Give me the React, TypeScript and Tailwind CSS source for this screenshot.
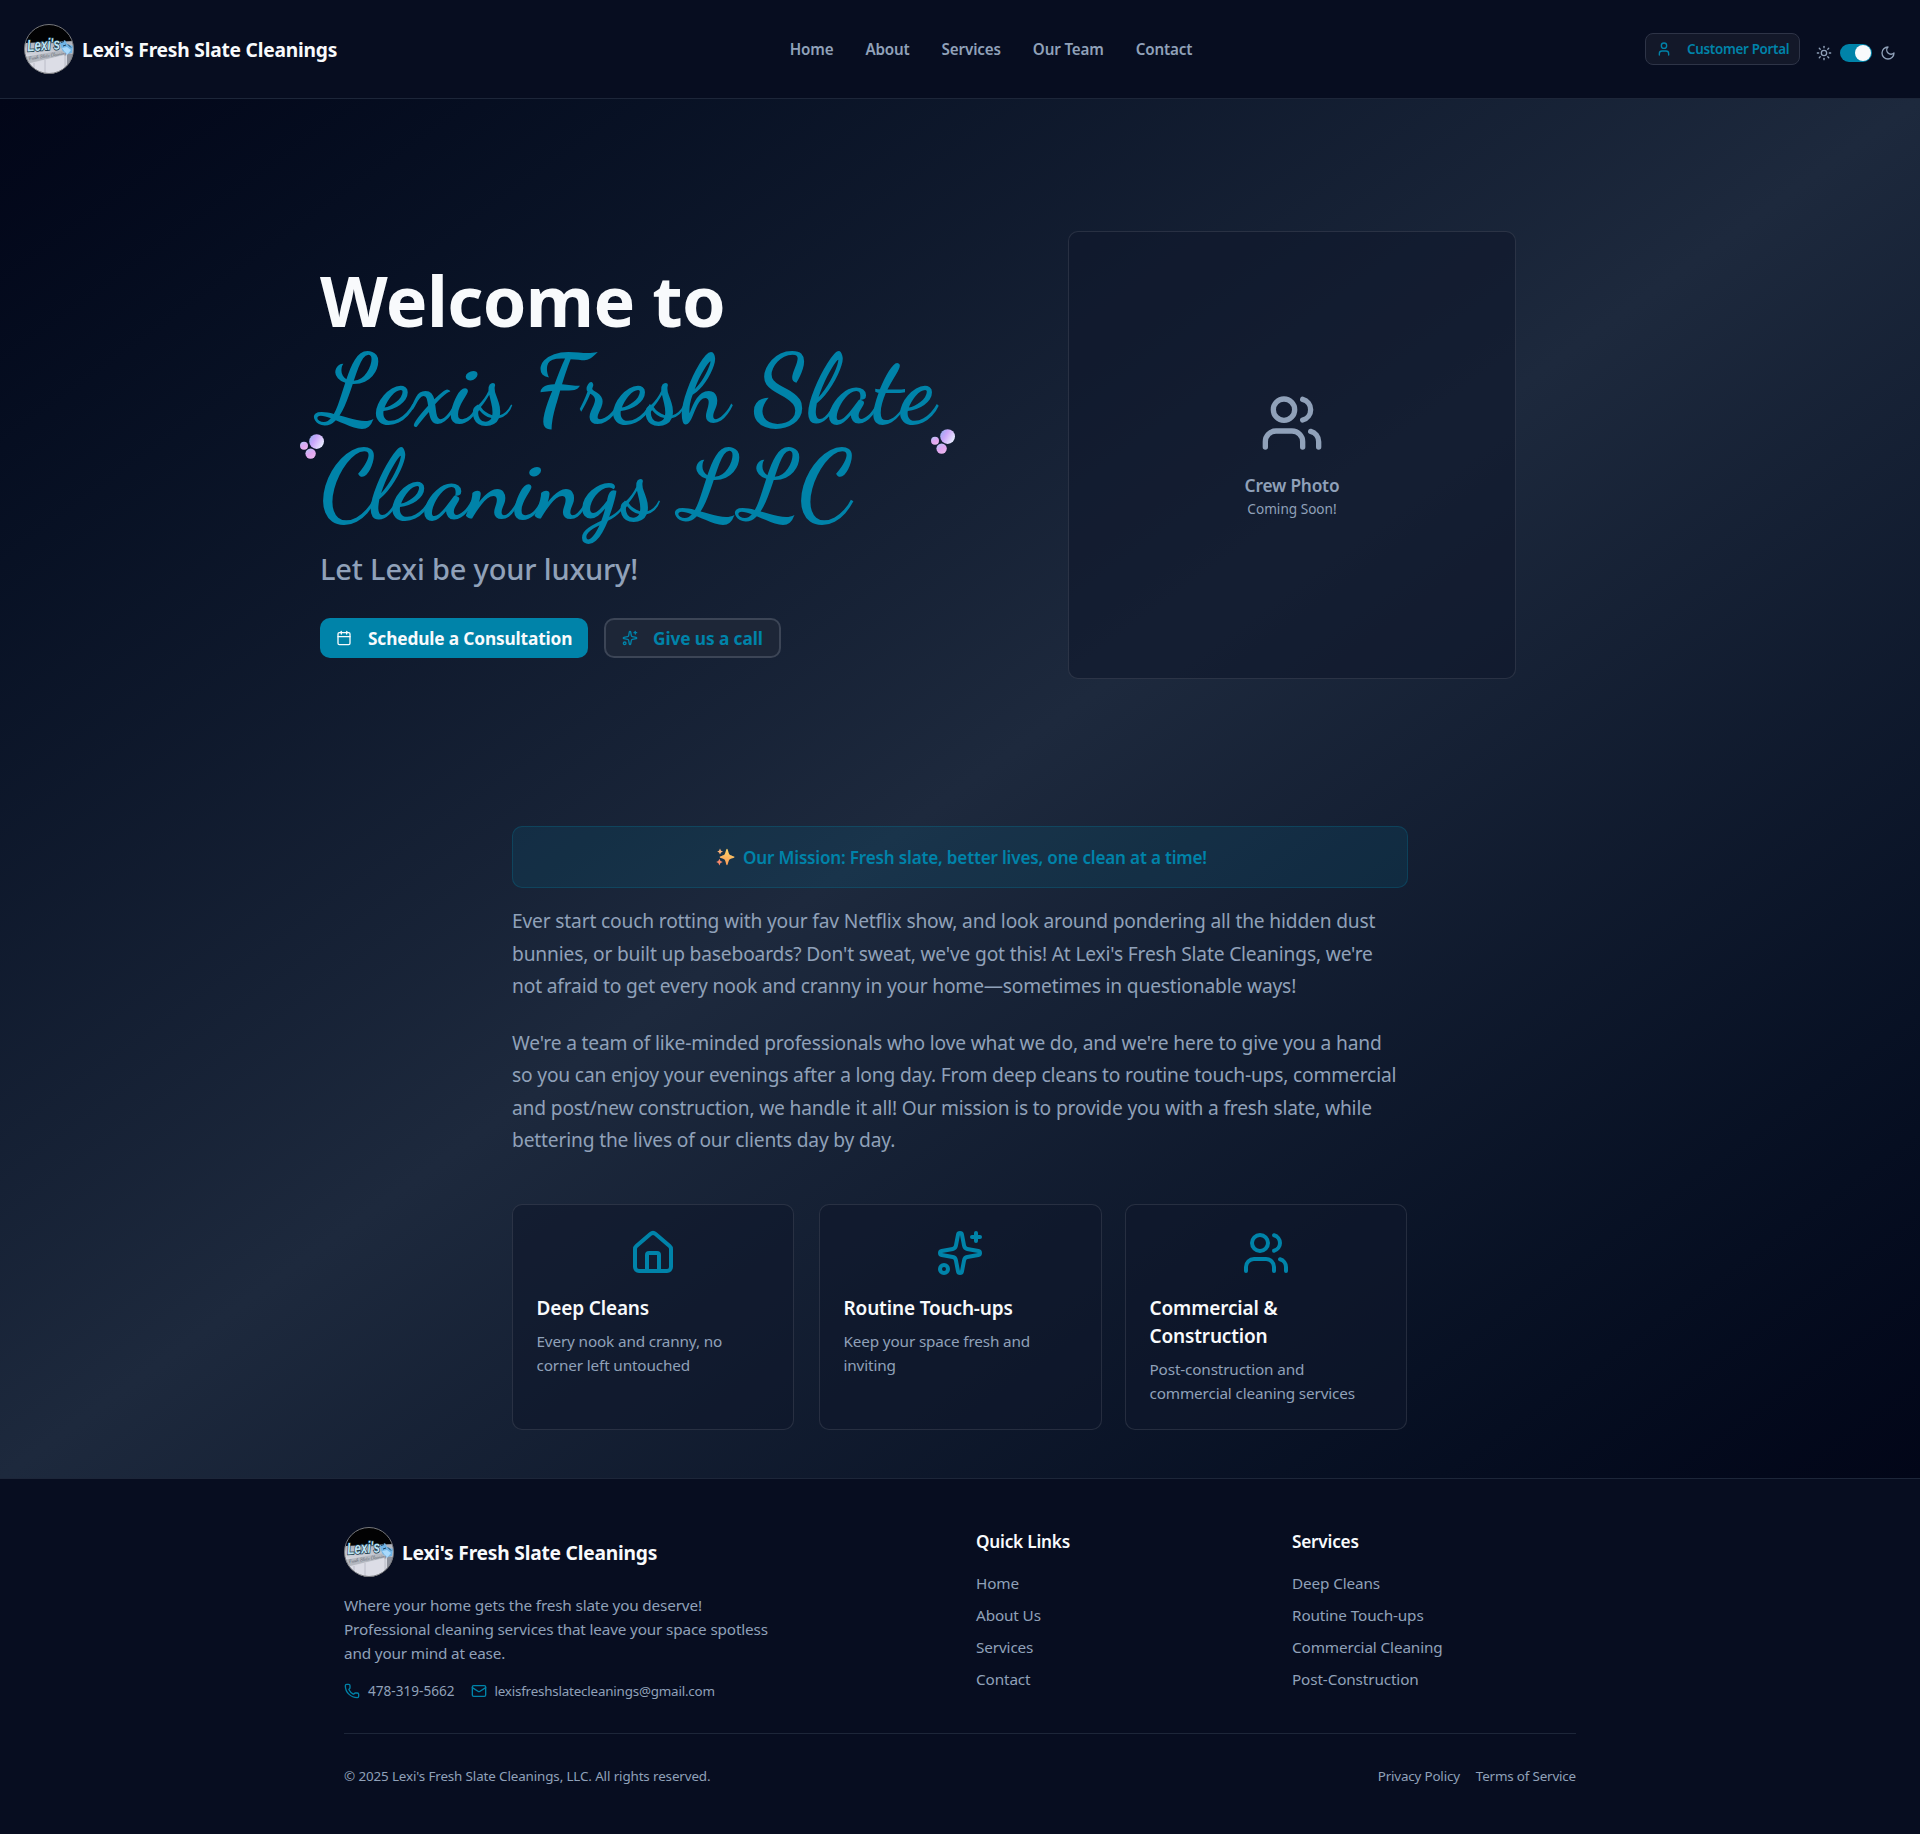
import React from 'react';
import { Calendar, House, Mail, Phone, Sparkles, Sun, User, Users } from 'lucide-react';

const navLinks = ['Home', 'About', 'Services', 'Our Team', 'Contact'];

const services = [
  { icon: House, title: 'Deep Cleans', text: 'Every nook and cranny, no corner left untouched', size: 'w-[282px]' },
  { icon: Sparkles, title: 'Routine Touch-ups', text: 'Keep your space fresh and inviting', size: 'ml-[25px] w-[283px]' },
  { icon: Users, title: 'Commercial & Construction', text: 'Post-construction and commercial cleaning services', size: 'ml-[23px] w-[282px]' },
];

const footerColumns = [
  { title: 'Quick Links', links: ['Home', 'About Us', 'Services', 'Contact'] },
  { title: 'Services', links: ['Deep Cleans', 'Routine Touch-ups', 'Commercial Cleaning', 'Post-Construction'] },
];

function Logo({ id }: { id: string }) {
  return (
    <svg className="size-[50px] shrink-0" viewBox="0 0 50 50">
      <defs>
        <clipPath id={`${id}-clip`}>
          <circle cx="25" cy="25" r="24.5" />
        </clipPath>
        <linearGradient id={`${id}-wall`} x1="0" y1="0" x2="0" y2="1">
          <stop offset="0" stopColor="#a9aeb8" />
          <stop offset="0.5" stopColor="#d9dbe3" />
          <stop offset="1" stopColor="#c9cbd4" />
        </linearGradient>
      </defs>
      <g clipPath={`url(#${id}-clip)`}>
        <rect width="50" height="50" fill="#020203" />
        <path d="M0 19 L50 17 V50 H0Z" fill={`url(#${id}-wall)`} />
        <path d="M0 33 L40 26 V31 L6 39 H0Z" fill="#b4b8c0" />
        <path d="M5 40 L41 31 V50 H5Z" fill="#dcdde6" />
        <path d="M10 39 V50 M21 36 V50 M41 29 V50" stroke="#b3b5c0" strokeWidth="0.8" fill="none" />
        <path d="M43 29 L50 30 V50 H43Z" fill="#8d919c" />
        <path d="M36 19 L41 16 L43 20 L49 22 L48 29 L42 30 L38 26Z" fill="#6fb4e6" />
        <path d="M38 24 L43 23 L47 26 L43 31Z" fill="#a9d9fb" />
        <path d="M37 18.5 L40 17.5 M44 20.5 L47 23.5 M39 22 L42 21" stroke="#1c3c57" strokeWidth="1" fill="none" />
        <text x="5" y="36" transform="rotate(-9 5 36)" fontFamily="Dancing Script" fontWeight="700" fontSize="5" fill="#6b717c">Fresh Slate Cleaning</text>
        <text x="3.5" y="27.5" transform="rotate(-4 3.5 27.5)" fontFamily="Liberation Sans" fontStyle="italic" fontWeight="700" fontSize="16.5" textLength="33" lengthAdjust="spacingAndGlyphs" stroke="#12303f" strokeWidth="1.5" paintOrder="stroke" fill="#bfe3f5">Lexi's</text>
      </g>
      <circle cx="25" cy="25" r="24.5" fill="none" stroke="#77787c" strokeWidth="1" />
    </svg>
  );
}

function Brand({ id, className }: { id: string; className: string }) {
  return (
    <div className="flex items-center gap-2">
      <Logo id={id} />
      <span className={`whitespace-nowrap text-[19.2px] font-bold tracking-[-0.21px] text-[#f8fafc] ${className}`}>
        Lexi's Fresh Slate Cleanings
      </span>
    </div>
  );
}

function Moon() {
  return (
    <svg className="size-4" viewBox="0 0 24 24" fill="none" stroke="currentColor" strokeWidth="2" strokeLinecap="round" strokeLinejoin="round">
      <path d="M12 3a6 6 0 0 0 9 9 9 9 0 1 1-9-9Z" />
    </svg>
  );
}

function Bubbles({ id, className }: { id: string; className: string }) {
  return (
    <svg className={`absolute h-[26px] w-[25px] ${className}`} viewBox="0 0 25 26">
      <defs>
        <linearGradient id={`${id}-big`} x1="0" y1="0.2" x2="1" y2="0.8">
          <stop offset="0" stopColor="#96aef0" />
          <stop offset="0.35" stopColor="#c9a5fa" />
          <stop offset="0.6" stopColor="#d9c3fb" />
          <stop offset="1" stopColor="#e9f6ff" />
        </linearGradient>
        <linearGradient id={`${id}-small`} x1="0.2" y1="0" x2="0.8" y2="1">
          <stop offset="0" stopColor="#b7c3f7" />
          <stop offset="0.5" stopColor="#e0a5f0" />
          <stop offset="1" stopColor="#ecb9ec" />
        </linearGradient>
      </defs>
      <circle cx="16.6" cy="7.6" r="7.4" fill={`url(#${id}-big)`} />
      <circle cx="4" cy="11.8" r="4" fill={`url(#${id}-small)`} />
      <circle cx="10.6" cy="19.6" r="5.2" fill={`url(#${id}-small)`} />
    </svg>
  );
}

function SparkleEmoji() {
  return (
    <svg className="h-[18px] w-[19px]" viewBox="0 0 19 18">
      <defs>
        <linearGradient id="sparkle" x1="0.6" y1="0" x2="0.4" y2="1">
          <stop offset="0" stopColor="#fbd66b" />
          <stop offset="1" stopColor="#fb9a55" />
        </linearGradient>
      </defs>
      <path d="M11 0.8C12 0.8 12.3 5.2 13.5 6.4C14.7 7.6 18.6 8 18.6 9C18.6 10 14.7 10.4 13.5 11.6C12.3 12.8 12 17.2 11 17.2C10 17.2 9.7 12.8 8.5 11.6C7.3 10.4 3.6 10 3.6 9C3.6 8 7.3 7.6 8.5 6.4C9.7 5.2 10 0.8 11 0.8Z" fill="url(#sparkle)" />
      <path d="M4 0.6L5 2.7L7 3.6L5 4.5L4 6.6L3 4.5L1.2 3.6L3 2.7Z" fill="#fbb27a" />
      <path d="M3.4 10.8L4.5 13.1L6.8 14.1L4.5 15.1L3.4 17.4L2.3 15.1L0.2 14.1L2.3 13.1Z" fill="#f98a6c" />
    </svg>
  );
}

function Header() {
  return (
    <header className="grid h-[99px] grid-cols-[1fr_auto_1fr] items-center border-b border-[#1d2639] bg-[#070d20] px-6">
      <Brand id="header-logo" className="pt-[2px]" />
      <nav className="flex gap-8 pt-px pl-[62px] text-[15.2px] font-semibold tracking-[-0.15px] text-[#90a1b9]">
        {navLinks.map((link) => (
          <a key={link} className="whitespace-nowrap">{link}</a>
        ))}
      </nav>
      <div className="flex items-center justify-end gap-4">
        <button className="flex h-8 w-[155px] items-center gap-[15px] rounded-lg border border-[#2e3447] bg-[#131829] px-2.5 text-[13.4px] font-semibold tracking-[-0.3px] whitespace-nowrap text-[#0083a9]">
          <User className="size-4 shrink-0" />
          Customer Portal
        </button>
        <div className="mt-2 flex items-center gap-2 text-[#90a1b9]">
          <Sun className="size-4" />
          <div className="flex h-[18px] w-8 items-center justify-end rounded-full bg-[#0083a9] px-px">
            <div className="size-4 rounded-full bg-[#f8fafc]" />
          </div>
          <Moon />
        </div>
      </div>
    </header>
  );
}

function Hero() {
  return (
    <section className="flex justify-between pr-[404px] pl-80">
      <div className="relative pt-[33px]">
        <h1>
          <span className="block text-[70px] leading-[72px] font-bold tracking-[-0.6px] text-[#f8fafc]">Welcome to</span>
          <span className="mt-[7px] block font-['Dancing_Script'] text-[96px] leading-[96px] font-bold whitespace-nowrap text-[#0083a9]">
            Lexis Fresh Slate<br />Cleanings LLC
          </span>
        </h1>
        <Bubbles id="bubbles-left" className="top-[203px] left-[-20px]" />
        <Bubbles id="bubbles-right" className="top-[198px] left-[611px]" />
        <p className="mt-4 text-[29px] leading-9 font-medium tracking-[-0.17px] text-[#90a1b9]">Let Lexi be your luxury!</p>
        <div className="mt-[31px] flex gap-4 text-[17.3px] font-bold">
          <button className="flex h-10 w-[268px] items-center gap-4 rounded-[10px] bg-[#0083a9] px-4 tracking-[-0.15px] whitespace-nowrap text-[#f8fafc]">
            <Calendar className="size-4 shrink-0" />
            <span className="pt-[2px]">Schedule a Consultation</span>
          </button>
          <button className="flex h-10 w-[177px] items-center gap-[15px] rounded-[10px] border-2 border-[#3c4556] bg-[#1d2637] px-4 tracking-[-0.1px] whitespace-nowrap text-[#0083a9]">
            <Sparkles className="size-4 shrink-0" />
            <span className="pt-[2px]">Give us a call</span>
          </button>
        </div>
      </div>
      <div className="flex size-[448px] flex-col items-center rounded-[10px] border border-white/10 bg-[#0f172b]/60 pt-[159px] text-[#90a1b9]">
        <Users className="size-16" />
        <p className="mt-[17px] text-[17.3px] leading-7 font-semibold tracking-[-0.2px]">Crew Photo</p>
        <p className="-mt-px text-[13.6px] leading-5">Coming Soon!</p>
      </div>
    </section>
  );
}

function Mission() {
  return (
    <section className="mx-auto mt-[147px] w-[896px]">
      <div className="flex h-[62px] items-center justify-center gap-2 rounded-[10px] border border-[#0083a9]/25 bg-[#0083a9]/13 pl-[3px] text-[17.1px] font-semibold tracking-[-0.19px] text-[#0083a9]">
        <SparkleEmoji />
        <span className="pt-[2px]">Our Mission: Fresh slate, better lives, one clean at a time!</span>
      </div>
      <div className="mt-[17px] flex max-w-[890px] flex-col gap-6 text-[19.2px] leading-[32.5px] tracking-[-0.167px] text-[#90a1b9]">
        <p>
          Ever start couch rotting with your fav Netflix show, and look around pondering all the hidden dust bunnies, or built up
          baseboards? Don't sweat, we've got this! At Lexi's Fresh Slate Cleanings, we're not afraid to get every nook and cranny in
          your home—sometimes in questionable ways!
        </p>
        <p>
          We're a team of like-minded professionals who love what we do, and we're here to give you a hand so you can enjoy your
          evenings after a long day. From deep cleans to routine touch-ups, commercial and post/new construction, we handle it all!
          Our mission is to provide you with a fresh slate, while bettering the lives of our clients day by day.
        </p>
      </div>
      <div className="mt-[47.5px] flex">
        {services.map(({ icon: Icon, title, text, size }) => (
          <div key={title} className={`h-[226px] shrink-0 rounded-[10px] border border-white/10 bg-[#0f172b]/60 py-6 pr-6 pl-[23.5px] ${size}`}>
            <Icon className="mx-auto size-12 text-[#0083a9]" />
            <h3 className="mt-[17px] text-[19px] leading-7 font-semibold tracking-[-0.15px] text-[#f8fafc]">{title}</h3>
            <p className="mt-[7px] text-[15.3px] leading-6 tracking-[-0.15px] text-[#90a1b9]">{text}</p>
          </div>
        ))}
      </div>
    </section>
  );
}

function Footer() {
  return (
    <footer className="border-t border-[#1d2639] bg-[#070d20] px-[344px] pt-12 pb-12 text-[#90a1b9]">
      <div className="grid grid-cols-4 gap-x-8">
        <div className="col-span-2">
          <Brand id="footer-logo" className="pt-[3px]" />
          <p className="mt-4 max-w-[448px] text-[15.3px] leading-6 tracking-[-0.16px]">
            Where your home gets the fresh slate you deserve! Professional cleaning services that leave your space spotless and your
            mind at ease.
          </p>
          <div className="mt-4 flex gap-4 text-[13.4px] leading-5">
            <div className="flex items-center gap-2">
              <Phone className="size-4 text-[#0083a9]" />
              <span className="text-[13.6px]">478-319-5662</span>
            </div>
            <div className="flex items-center gap-2">
              <Mail className="size-4 text-[#0083a9]" />
              <span className="tracking-[-0.2px]">lexisfreshslatecleanings@gmail.com</span>
            </div>
          </div>
        </div>
        {footerColumns.map(({ title, links }) => (
          <div key={title}>
            <h4 className="pt-px text-[17.2px] leading-7 font-semibold tracking-[-0.22px] text-[#f8fafc]">{title}</h4>
            <ul className="mt-[15px] flex flex-col gap-2 text-[15.3px] leading-6 tracking-[-0.13px]">
              {links.map((link) => (
                <li key={link}>{link}</li>
              ))}
            </ul>
          </div>
        ))}
      </div>
      <div className="mt-8 flex justify-between border-t border-[#1d2639] pt-8 text-[13.4px] leading-5 tracking-[-0.12px]">
        <p>© 2025 Lexi's Fresh Slate Cleanings, LLC. All rights reserved.</p>
        <div className="flex gap-4 tracking-[-0.17px]">
          <a>Privacy Policy</a>
          <a>Terms of Service</a>
        </div>
      </div>
    </footer>
  );
}

export default function App() {
  return (
    <div className="h-[1834px] overflow-hidden bg-[#070d20] font-['Noto_Sans',sans-serif]">
      <Header />
      <main className="bg-gradient-to-br from-[#020618] via-[#1d293d] to-[#020618] pt-[132px] pb-12">
        <Hero />
        <Mission />
      </main>
      <Footer />
    </div>
  );
}
